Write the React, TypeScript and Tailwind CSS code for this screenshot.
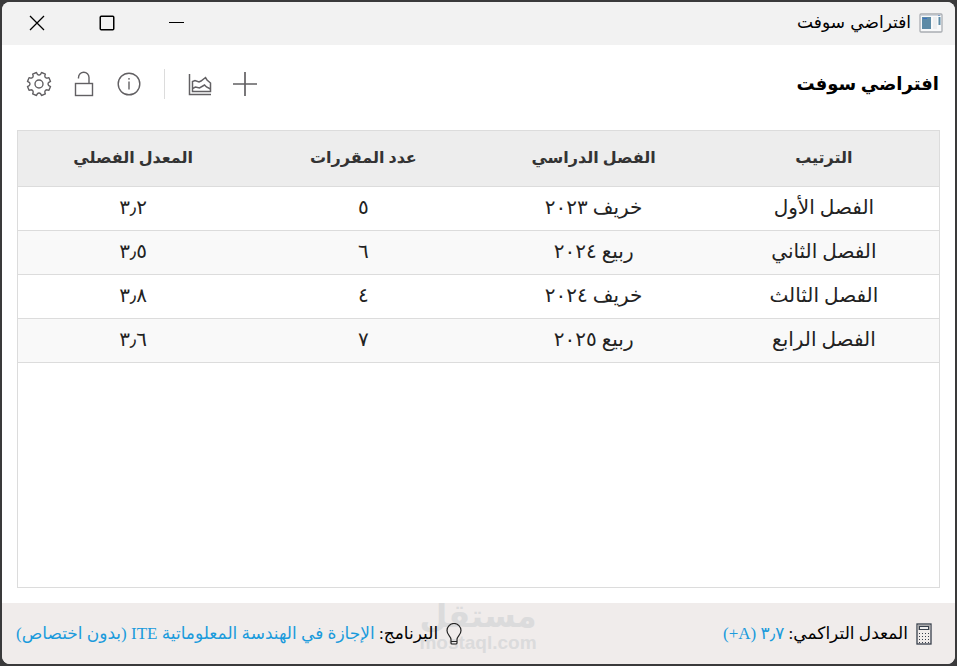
import type { ReactNode } from 'react';

type Term = { order: string; term: string; courses: string; gpa: string };

const terms: Term[] = [
  { order: 'الفصل الأول', term: 'خريف ٢٠٢٣', courses: '٥', gpa: '٣٫٢' },
  { order: 'الفصل الثاني', term: 'ربيع ٢٠٢٤', courses: '٦', gpa: '٣٫٥' },
  { order: 'الفصل الثالث', term: 'خريف ٢٠٢٤', courses: '٤', gpa: '٣٫٨' },
  { order: 'الفصل الرابع', term: 'ربيع ٢٠٢٥', courses: '٧', gpa: '٣٫٦' },
];

const headings = ['الترتيب', 'الفصل الدراسي', 'عدد المقررات', 'المعدل الفصلي'];

function IconButton({ label, children }: { label: string; children: ReactNode }) {
  return (
    <button type="button" aria-label={label} className="flex size-[26px] items-center justify-center text-[#626063]">
      {children}
    </button>
  );
}

function AppIcon() {
  return (
    <svg width="24" height="20" viewBox="0 0 24 20" aria-hidden="true">
      <rect x="1" y="1" width="22" height="18" rx="1" fill="#f8f9fa" stroke="#a9adb2" strokeWidth="1.3" />
      <path d="M2 2.5h20" stroke="#cdd5de" />
      <rect x="3" y="4" width="9" height="12" fill="#5d8ba6" />
      <path d="M4 5.500h4" stroke="#3a6fc4" />
      <path d="M14 4h4v12h-4z" fill="#eceef0" />
      <path d="M20.500 4v8" stroke="#5d8ba6" strokeWidth="2" />
      <path d="M19 2.500h2" stroke="#7f9fc9" />
    </svg>
  );
}

/* Eight short teeth separated by rounded notches. */
function gearOutline() {
  const point = (radius: number, degrees: number) => {
    const a = (degrees * Math.PI) / 180;
    return `${(13 + radius * Math.cos(a)).toFixed(2)} ${(13 + radius * Math.sin(a)).toFixed(2)}`;
  };
  const teeth = Array.from({ length: 8 }, (_, i) => {
    const mid = 22.5 + i * 45;
    return `${i === 0 ? 'M' : 'L'}${point(11.8, mid - 10)}L${point(11.8, mid + 10)}L${point(10, mid + 13)}Q${point(8.2, mid + 22.5)} ${point(10, mid + 32)}`;
  });
  return `${teeth.join('')}Z`;
}

function GearIcon() {
  return (
    <svg width="26" height="26" viewBox="0 0 26 26" fill="none" stroke="currentColor" strokeWidth="1.4" strokeLinejoin="round" aria-hidden="true">
      <circle cx="13" cy="13" r="4" />
      <path d={gearOutline()} />
    </svg>
  );
}

function UnlockIcon() {
  return (
    <svg width="20" height="26" viewBox="0 0 20 26" fill="none" stroke="currentColor" strokeWidth="1.4" aria-hidden="true">
      <rect x="1.500" y="12.500" width="17" height="12" />
      <path d="M4.500 7.500V6.500a5 5 0 0 1 10.500 0v6" />
    </svg>
  );
}

function InfoIcon() {
  return (
    <svg width="24" height="24" viewBox="0 0 24 24" fill="none" stroke="currentColor" strokeWidth="1.4" aria-hidden="true">
      <circle cx="12" cy="12" r="10.800" />
      <path d="M12 9.500v8" />
      <circle cx="12" cy="6.800" r=".9" fill="currentColor" stroke="none" />
    </svg>
  );
}

function ChartIcon() {
  return (
    <svg width="24" height="24" viewBox="0 0 24 24" fill="none" stroke="currentColor" strokeWidth="1.5" aria-hidden="true">
      <path d="M1.500 2v20.500H23" />
      <path d="M4.500 19.500V9.500l2.500-1 4 1.500 2-1 4.500-3.500L19 8l3.500 3v8.500Z" />
      <path d="M4.500 16.500l3-1.500 4 1 5-3 2 2 4 2" />
    </svg>
  );
}

function PlusIcon() {
  return (
    <svg width="26" height="26" viewBox="0 0 26 26" fill="none" stroke="currentColor" strokeWidth="1.7" aria-hidden="true">
      <path d="M13 1v24M1 13h24" />
    </svg>
  );
}

function CalculatorIcon() {
  return (
    <svg width="16" height="22" viewBox="0 0 16 22" fill="none" stroke="#38404c" aria-hidden="true">
      <rect x="1" y="1" width="14" height="20" strokeWidth="1.3" />
      <path d="M1.700 2h12.600v5H1.700z" fill="#aaa" stroke="none" />
      <rect x="3.500" y="3.500" width="9" height="3" fill="#eee" />
      <path d="M3 10.500h10M3 13.500h10M3 16.500h10M3 19.500h10" strokeDasharray="1 2" />
    </svg>
  );
}

function BulbIcon() {
  return (
    <svg width="16" height="22" viewBox="0 0 16 22" fill="none" stroke="#252525" strokeWidth="1.2" aria-hidden="true">
      <path d="M5 16.500C5 13.500 1 12 1 7.500a7 7 0 0 1 14 0C15 12 11 13.500 11 16.500M5 16.500V20q0 1 1 1h4q1 0 1-1v-3.500M5 18.500h6" />
    </svg>
  );
}

export default function App() {
  return (
    <div className="h-screen bg-[#3a3a3b] p-[2px] font-['Liberation_Serif','DejaVu_Sans',serif]">
      <div dir="rtl" className="flex h-full flex-col overflow-hidden rounded-lg bg-white text-[#222]">
        <header className="flex h-[43px] shrink-0 items-center justify-between bg-[#f2f2f2] ps-3 pb-[2px] text-black">
          <div className="flex items-center gap-2">
            <AppIcon />
            <span className="font-['DejaVu_Sans',sans-serif] text-[17px]">افتراضي سوفت</span>
          </div>
          <div dir="ltr" className="flex h-full">
            <button type="button" aria-label="إغلاق" className="flex w-[70px] items-center justify-center">
              <svg width="16" height="16" viewBox="0 0 16 16" fill="none" stroke="currentColor" strokeWidth="1.300"><path d="m1 1 14 14M15 1 1 15" /></svg>
            </button>
            <button type="button" aria-label="تكبير" className="flex w-[70px] items-center justify-center">
              <svg width="16" height="16" viewBox="0 0 16 16" fill="none" stroke="currentColor" strokeWidth="1.500"><rect x="1.250" y="1.250" width="13.500" height="13.500" rx="1" /></svg>
            </button>
            <button type="button" aria-label="تصغير" className="flex w-[70px] items-center justify-center">
              <svg width="16" height="16" viewBox="0 0 16 16" stroke="currentColor"><path d="M0 7.500h15" /></svg>
            </button>
          </div>
        </header>

        <div className="flex h-[78px] shrink-0 items-center justify-between ps-4 pe-6">
          <h1 className="text-[18px] font-bold text-black">افتراضي سوفت</h1>
          <div dir="ltr" className="flex items-center gap-[19px]">
            <IconButton label="الإعدادات"><GearIcon /></IconButton>
            <IconButton label="القفل"><UnlockIcon /></IconButton>
            <IconButton label="معلومات"><InfoIcon /></IconButton>
            <div className="mx-[3px] h-[30px] w-px bg-[#dcdcdc]" />
            <IconButton label="المخطط"><ChartIcon /></IconButton>
            <IconButton label="إضافة"><PlusIcon /></IconButton>
          </div>
        </div>

        <main className="mx-[15px] mt-[7px] mb-[15px] flex-1 border border-[#dcdcdc]">
          <table className="w-full table-fixed border-collapse text-center">
            <thead>
              <tr className="h-[55px] border-b border-[#dcdcdc] bg-[#ededed] text-[16px] text-[#333]">
                {headings.map((heading) => (
                  <th key={heading} scope="col" className="p-0 font-bold">{heading}</th>
                ))}
              </tr>
            </thead>
            <tbody className="text-[20px] leading-6">
              {terms.map((row) => (
                <tr key={row.order} className="h-11 border-b border-[#dcdcdc] even:bg-[#f9f9f9]">
                  <td className="p-0 pb-[2px]">{row.order}</td>
                  <td className="p-0 pb-[2px]">{row.term}</td>
                  <td className="p-0 pb-[2px]">{row.courses}</td>
                  <td className="p-0 pb-[2px]">{row.gpa}</td>
                </tr>
              ))}
            </tbody>
          </table>
        </main>

        <footer className="relative flex h-[61px] shrink-0 items-center justify-between bg-[#f0eceb] ps-[23px] pe-[14px] text-[17px] text-black">
          <div className="absolute start-[419px] -top-1 flex w-[116px] flex-col items-center font-bold text-[#dbdbdc]">
            <span className="font-['DejaVu_Sans',sans-serif] text-[32px] leading-[34px]">مستقل</span>
            <span dir="ltr" className="font-['Liberation_Sans',sans-serif] text-[19px] leading-5">mostaql.com</span>
          </div>
          <div className="relative flex items-center gap-2">
            <CalculatorIcon />
            <p>المعدل التراكمي: <span className="text-[#1b9bdc]">٣٫٧ (A+)</span></p>
          </div>
          <div className="relative flex items-center gap-2">
            <BulbIcon />
            <p>البرنامج: <span className="text-[#1b9bdc]">الإجازة في الهندسة المعلوماتية ITE (بدون اختصاص)</span></p>
          </div>
        </footer>
      </div>
    </div>
  );
}
